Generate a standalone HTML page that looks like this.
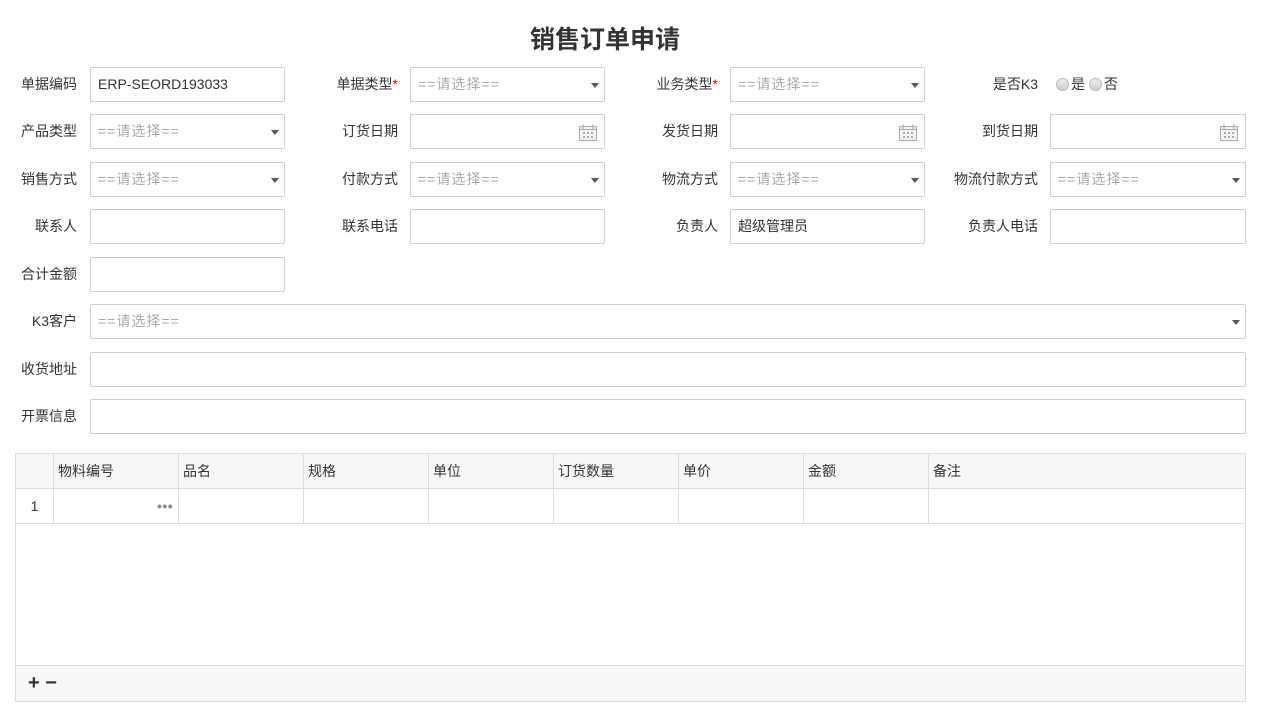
<!DOCTYPE html>
<html><head><meta charset="utf-8">
<style>
*{box-sizing:border-box;margin:0;padding:0}
body{width:1262px;height:716px;background:#fff;position:relative;font-family:"Liberation Sans","Noto Sans CJK SC",sans-serif;font-size:14px;color:#333;overflow:hidden}
.t{position:absolute;left:0;width:1210px;top:20px;text-align:center;font-size:25px;font-weight:bold;color:#333}
.l{position:absolute;width:120px;text-align:right;height:34px;line-height:34px;color:#333}
.i{position:absolute;height:35px;border:1px solid #ccc;border-radius:2px;background:#fff;line-height:33px;padding-left:7px;color:#333}
.p{color:#aaa;letter-spacing:1px}
.s::after{content:"";position:absolute;right:5px;top:15px;border-left:4.5px solid transparent;border-right:4.5px solid transparent;border-top:5px solid #555}
.st{color:#e00}
.cal{position:absolute;right:6px;top:7px}
.r{display:inline-block;width:13px;height:13px;border:1px solid #bbb;border-radius:50%;background:linear-gradient(#eee,#ccc);vertical-align:-2px;margin-right:2px}
table{position:absolute;left:15px;top:453px;width:1231px;border-collapse:collapse;table-layout:fixed}
td{border:1px solid #ddd;height:35px;padding-left:4px;vertical-align:middle}
tr.h td{background:#f7f7f7;height:35px}
.body{position:absolute;left:15px;top:523px;width:1231px;height:143px;border-left:1px solid #ddd;border-right:1px solid #ddd;border-bottom:1px solid #ddd}
.foot{position:absolute;left:15px;top:665px;width:1231px;height:37px;background:#f7f7f7;border:1px solid #ddd;font-weight:bold;font-size:20px;line-height:35px;padding-left:12px;color:#333}
</style></head><body>
<div class="t">销售订单申请</div>

<div class="l" style="left:-43px;top:67px">单据编码</div>
<div class="i" style="left:90px;top:67px;width:195px">ERP-SEORD193033</div>
<div class="l" style="left:278px;top:67px">单据类型<span class="st">*</span></div>
<div class="i s p" style="left:410px;top:67px;width:195px">==请选择==</div>
<div class="l" style="left:598px;top:67px">业务类型<span class="st">*</span></div>
<div class="i s p" style="left:730px;top:67px;width:195px">==请选择==</div>
<div class="l" style="left:918px;top:67px">是否K3</div>
<div style="position:absolute;left:1056px;top:67px;line-height:34px"><span class="r"></span>是 <span class="r"></span>否</div>

<div class="l" style="left:-43px;top:114px">产品类型</div>
<div class="i s p" style="left:90px;top:114px;width:195px">==请选择==</div>
<div class="l" style="left:278px;top:114px">订货日期</div>
<div class="i" style="left:410px;top:114px;width:195px"><svg class="cal" width="20" height="20" viewBox="0 0 20 20"><rect x="1.5" y="4.5" width="17" height="14" fill="#f3f3f3" stroke="#aaa"/><path d="M5 2v5M15 2v5M1.5 7.5h17" stroke="#aaa"/><g fill="#aaa"><rect x="5" y="10" width="2" height="2"/><rect x="9" y="10" width="2" height="2"/><rect x="13" y="10" width="2" height="2"/><rect x="5" y="14" width="2" height="2"/><rect x="9" y="14" width="2" height="2"/><rect x="13" y="14" width="2" height="2"/></g></svg></div>
<div class="l" style="left:598px;top:114px">发货日期</div>
<div class="i" style="left:730px;top:114px;width:195px"><svg class="cal" width="20" height="20" viewBox="0 0 20 20"><rect x="1.5" y="4.5" width="17" height="14" fill="#f3f3f3" stroke="#aaa"/><path d="M5 2v5M15 2v5M1.5 7.5h17" stroke="#aaa"/><g fill="#aaa"><rect x="5" y="10" width="2" height="2"/><rect x="9" y="10" width="2" height="2"/><rect x="13" y="10" width="2" height="2"/><rect x="5" y="14" width="2" height="2"/><rect x="9" y="14" width="2" height="2"/><rect x="13" y="14" width="2" height="2"/></g></svg></div>
<div class="l" style="left:918px;top:114px">到货日期</div>
<div class="i" style="left:1050px;top:114px;width:196px"><svg class="cal" width="20" height="20" viewBox="0 0 20 20"><rect x="1.5" y="4.5" width="17" height="14" fill="#f3f3f3" stroke="#aaa"/><path d="M5 2v5M15 2v5M1.5 7.5h17" stroke="#aaa"/><g fill="#aaa"><rect x="5" y="10" width="2" height="2"/><rect x="9" y="10" width="2" height="2"/><rect x="13" y="10" width="2" height="2"/><rect x="5" y="14" width="2" height="2"/><rect x="9" y="14" width="2" height="2"/><rect x="13" y="14" width="2" height="2"/></g></svg></div>

<div class="l" style="left:-43px;top:162px">销售方式</div>
<div class="i s p" style="left:90px;top:162px;width:195px">==请选择==</div>
<div class="l" style="left:278px;top:162px">付款方式</div>
<div class="i s p" style="left:410px;top:162px;width:195px">==请选择==</div>
<div class="l" style="left:598px;top:162px">物流方式</div>
<div class="i s p" style="left:730px;top:162px;width:195px">==请选择==</div>
<div class="l" style="left:918px;top:162px">物流付款方式</div>
<div class="i s p" style="left:1050px;top:162px;width:196px">==请选择==</div>

<div class="l" style="left:-43px;top:209px">联系人</div>
<div class="i" style="left:90px;top:209px;width:195px"></div>
<div class="l" style="left:278px;top:209px">联系电话</div>
<div class="i" style="left:410px;top:209px;width:195px"></div>
<div class="l" style="left:598px;top:209px">负责人</div>
<div class="i" style="left:730px;top:209px;width:195px">超级管理员</div>
<div class="l" style="left:918px;top:209px">负责人电话</div>
<div class="i" style="left:1050px;top:209px;width:196px"></div>

<div class="l" style="left:-43px;top:257px">合计金额</div>
<div class="i" style="left:90px;top:257px;width:195px"></div>

<div class="l" style="left:-43px;top:304px">K3客户</div>
<div class="i s p" style="left:90px;top:304px;width:1156px">==请选择==</div>
<div class="l" style="left:-43px;top:352px">收货地址</div>
<div class="i" style="left:90px;top:352px;width:1156px"></div>
<div class="l" style="left:-43px;top:399px">开票信息</div>
<div class="i" style="left:90px;top:399px;width:1156px"></div>

<table>
<colgroup><col style="width:38px"><col style="width:125px"><col style="width:125px"><col style="width:125px"><col style="width:125px"><col style="width:125px"><col style="width:125px"><col style="width:125px"><col></colgroup>
<tr class="h"><td></td><td>物料编号</td><td>品名</td><td>规格</td><td>单位</td><td>订货数量</td><td>单价</td><td>金额</td><td>备注</td></tr>
<tr><td style="text-align:center;padding:0">1</td><td style="text-align:right;padding-right:5px;color:#888;font-size:9px">●●●</td><td></td><td></td><td></td><td></td><td></td><td></td><td></td></tr>
</table>
<div class="body"></div>
<div class="foot">+ &#8722;</div>
</body></html>
